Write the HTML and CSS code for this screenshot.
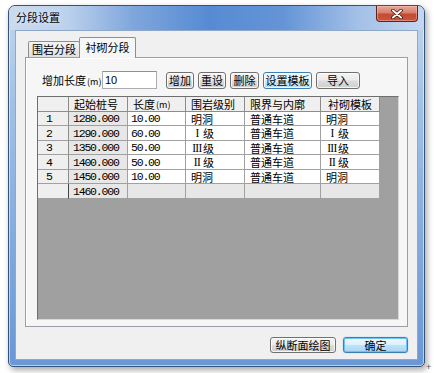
FILE: index.html
```html
<!DOCTYPE html>
<html lang="zh-CN">
<head>
  <meta charset="UTF-8" />
  <title>分段设置</title>
  <link rel="stylesheet" href="styles.css">
</head>
<body>
  <div class="window">
    <div class="titlebar">
      <span class="title">分段设置</span>
      <button class="close">
        <svg width="12" height="10" viewBox="0 0 12 10">
          <path d="M2 1.5 L10 8.5 M10 1.5 L2 8.5" stroke="#3a1410" stroke-width="3.6" stroke-linecap="round"/>
          <path d="M2 1.5 L10 8.5 M10 1.5 L2 8.5" stroke="#fff" stroke-width="2" stroke-linecap="round"/>
        </svg>
      </button>
    </div>

    <div class="client">
      <div class="tabs">
        <div class="tab">围岩分段</div>
        <div class="tab active">衬砌分段</div>
      </div>

      <div class="tab-page">
        <div class="toolbar">
          <span class="field-label">增加长度<small>(m)</small></span>
          <input class="field" type="text" value="10">
          <button class="btn w28">增加</button>
          <button class="btn w28">重设</button>
          <button class="btn w29">删除</button>
          <button class="btn focus w49">设置模板</button>
          <button class="btn w44">导入</button>
        </div>

        <div class="grid">
          <div class="cell hd"></div>
          <div class="cell hd">起始桩号</div>
          <div class="cell hd">长度<small>(m)</small></div>
          <div class="cell hd">围岩级别</div>
          <div class="cell hd">限界与内廓</div>
          <div class="cell hd last-hd">衬砌模板</div>

          <div class="cell rh num">1</div>
          <div class="cell ro num">1280.000</div>
          <div class="cell num">10.00</div>
          <div class="cell">明洞</div>
          <div class="cell">普通车道</div>
          <div class="cell">明洞</div>

          <div class="cell rh num">2</div>
          <div class="cell ro num">1290.000</div>
          <div class="cell num">60.00</div>
          <div class="cell"><span class="roman">I</span>级</div>
          <div class="cell">普通车道</div>
          <div class="cell"><span class="roman">I</span>级</div>

          <div class="cell rh num">3</div>
          <div class="cell ro num">1350.000</div>
          <div class="cell num">50.00</div>
          <div class="cell"><span class="roman">III</span>级</div>
          <div class="cell">普通车道</div>
          <div class="cell"><span class="roman">III</span>级</div>

          <div class="cell rh num">4</div>
          <div class="cell ro num">1400.000</div>
          <div class="cell num">50.00</div>
          <div class="cell"><span class="roman">II</span>级</div>
          <div class="cell">普通车道</div>
          <div class="cell"><span class="roman">II</span>级</div>

          <div class="cell rh num">5</div>
          <div class="cell ro num">1450.000</div>
          <div class="cell num">10.00</div>
          <div class="cell">明洞</div>
          <div class="cell">普通车道</div>
          <div class="cell">明洞</div>

          <div class="cell rh new-row"></div>
          <div class="cell ro num">1460.000</div>
          <div class="cell ro"></div>
          <div class="cell ro"></div>
          <div class="cell ro"></div>
          <div class="cell ro"></div>
        </div>
      </div>

      <div class="footer">
        <button class="btn w66">纵断面绘图</button>
        <button class="btn default w65">确定</button>
      </div>
    </div>
  </div>
  <span class="cursor-mark">+</span>
</body>
</html>
```

FILE: styles.css
```css
body {
  margin: 0;
  background: #fff;
  font-family: "Noto Sans CJK SC", "Liberation Sans", sans-serif;
  font-size: 11px;
  color: #000;
  width: 434px;
  height: 373px;
  overflow: hidden;
  position: relative;
}

small {
  font-size: 9px;
  margin-left: 1px;
}

.window {
  box-sizing: border-box;
  width: 417px;
  height: 362px;
  margin: 5px 0 0 8px;
  border: 1px solid #34537a;
  border-radius: 7px 7px 5px 5px;
  background: linear-gradient(#c2d6ef, #9fbfe6 30%, #7ea7dc 70%, #6a97d6);
  box-shadow: inset 0 0 0 1px rgba(255, 255, 255, 0.55), 2px 3px 6px rgba(0, 0, 0, 0.35);
  display: flex;
  flex-direction: column;
  overflow: hidden;
}

.titlebar {
  height: 24px;
  flex: none;
  display: flex;
  align-items: flex-start;
  padding: 0 6px 0 7px;
  background: linear-gradient(90deg, #cbdbee 0%, #bcd1ec 14%, #7fa6dc 30%, #568bd4 48%, #6494d6 66%, #a3c0e7 84%, #c5d7ef 100%);
  border-radius: 6px 6px 0 0;
}

.title {
  line-height: 22px;
  font-size: 11px;
  text-shadow: 0 0 5px rgba(255, 255, 255, 0.9);
}

.close {
  margin-left: auto;
  width: 42px;
  height: 16px;
  padding: 0;
  border: 1px solid #5a241c;
  border-top: none;
  border-radius: 0 0 4px 4px;
  background: linear-gradient(#e9a899 0%, #d8806d 45%, #c44a33 55%, #c8563f 100%);
  box-shadow: inset 0 0 0 1px rgba(255, 200, 190, 0.45);
  display: flex;
  align-items: center;
  justify-content: center;
}

.client {
  flex: 1;
  margin: 0 6px 6px;
  border: 1px solid #8fa8c8;
  background: #f0f0f0;
  padding: 7px 9px 0;
  display: flex;
  flex-direction: column;
}

.tabs {
  height: 19px;
  display: flex;
  align-items: flex-end;
  padding-left: 3px;
  position: relative;
  z-index: 1;
}

.tab {
  box-sizing: border-box;
  height: 16px;
  width: 52px;
  border: 1px solid #8b8e95;
  border-bottom: none;
  border-radius: 2px 2px 0 0;
  background: linear-gradient(#f3f3f3, #e0e0e0);
  line-height: 15px;
  text-align: center;
  font-size: 11px;
}

.tab.active {
  height: 21px;
  width: 57px;
  margin-left: -1px;
  margin-bottom: -1px;
  background: #f6f6f6;
  line-height: 19px;
}

.tab-page {
  box-sizing: border-box;
  height: 270px;
  border: 1px solid #9a9da3;
  background: #f6f6f6;
  box-shadow: inset 1px 1px 0 #fff;
  padding: 13px 8px 6px 11px;
  display: flex;
  flex-direction: column;
}

.toolbar {
  height: 18px;
  display: flex;
  align-items: center;
  gap: 4px;
  padding-left: 5px;
  flex: none;
}

.field-label {
  width: 60px;
  margin-right: -4px;
  white-space: nowrap;
}

.field {
  box-sizing: border-box;
  width: 55px;
  height: 18px;
  margin-right: 5px;
  border: 1px solid #abadb3;
  border-top-color: #8e9199;
  background: #fff;
  padding: 0 2px;
  font-family: "Liberation Sans", sans-serif;
  font-size: 11px;
}

.btn {
  box-sizing: border-box;
  height: 17px;
  padding: 0;
  border: 1px solid #707070;
  border-radius: 3px;
  background: linear-gradient(#f4f4f4 0%, #ebebeb 48%, #dcdcdc 52%, #d0d0d0 100%);
  box-shadow: inset 0 0 0 1px rgba(255, 255, 255, 0.75);
  font-family: "Noto Sans CJK SC", sans-serif;
  font-size: 11px;
  line-height: 15px;
  color: #000;
}

.btn.focus {
  border-color: #3c7fb1;
  background: linear-gradient(#eef7fd 0%, #e2f2fc 48%, #cbe8fb 52%, #b6dcf5 100%);
  box-shadow: inset 0 0 0 1px rgba(255, 255, 255, 0.8);
}

.btn.default {
  border-color: #3c7fb1;
  background: linear-gradient(#f0f8fe 0%, #dcf0fc 48%, #bfe2f9 52%, #a9d5f3 100%);
  box-shadow: inset 0 0 0 1px #6cc3f5, 0 0 1px #49a5e6;
}

.w28 { width: 28px; }
.w29 { width: 29px; }
.w44 { width: 44px; }
.w49 { width: 49px; }
.w65 { width: 65px; }
.w66 { width: 66px; }

.grid {
  box-sizing: border-box;
  margin-top: 7px;
  flex: 1;
  border: 1px solid #6f6f6f;
  border-right-color: #d8d8d8;
  border-bottom-color: #d8d8d8;
  background: #a0a0a0;
  display: grid;
  grid-template-columns: 31px 59px 58px 59px 76px 59px;
  grid-template-rows: 15px 14px 15px 14px 15px 14px 15px;
  align-content: start;
}

.cell {
  box-sizing: border-box;
  border-right: 1px solid #a0a0a0;
  border-bottom: 1px solid #a0a0a0;
  background: #fff;
  padding-left: 5px;
  display: flex;
  align-items: center;
  white-space: nowrap;
  overflow: hidden;
}

.cell.hd {
  background: #efefef;
  border-color: #8c8c8c;
}

.cell.last-hd {
  padding-left: 7px;
}

.cell.rh {
  background: #efefef;
  padding-left: 8px;
  border-right-color: #8c8c8c;
}

.cell.ro {
  background: #e7e7e7;
  padding-left: 4px;
}

.cell.new-row {
  border-right-color: #444;
}

.num {
  font-family: "Liberation Mono", monospace;
  font-size: 11.5px;
  letter-spacing: -1.2px;
  padding-left: 3px;
}

.roman {
  display: inline-block;
  width: 12px;
  text-align: center;
  font-family: "Liberation Serif", serif;
  font-size: 11.5px;
  letter-spacing: -0.6px;
}

.footer {
  flex: 1;
  display: flex;
  justify-content: flex-end;
  align-items: flex-start;
  gap: 7px;
  padding-top: 10px;
}

.footer .btn {
  height: 16px;
  line-height: 14px;
}

.cursor-mark {
  position: absolute;
  left: 426px;
  top: 362px;
  font-family: "Liberation Sans", sans-serif;
  font-size: 9px;
  color: #555;
}
```
